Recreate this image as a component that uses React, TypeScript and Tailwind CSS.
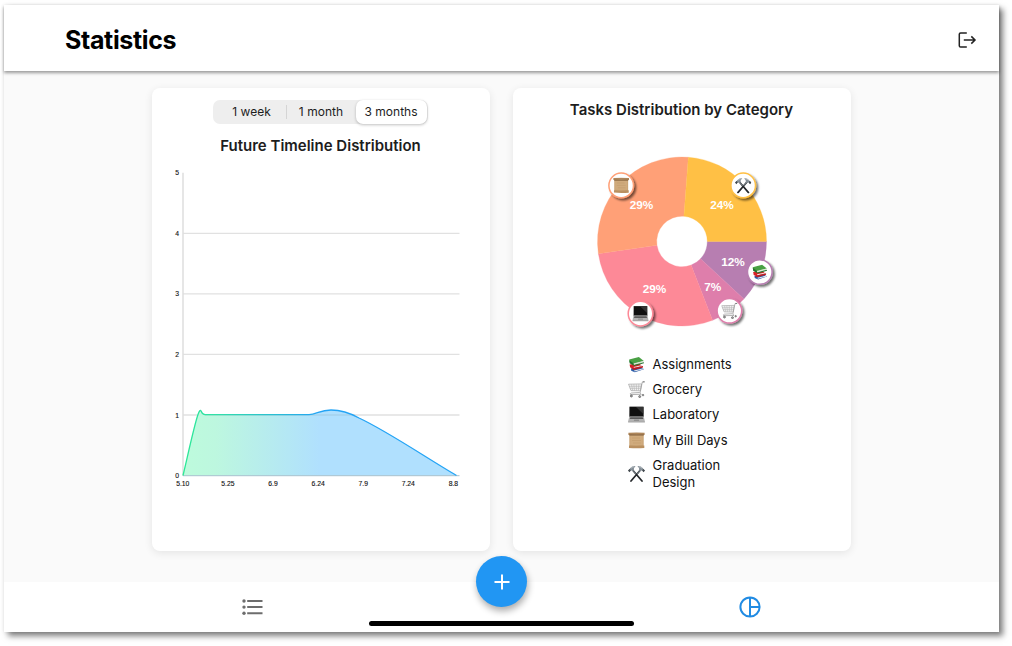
import React from "react";

type IconProps = { x?: number; y?: number; size?: number };

function Books({ x, y, size = 17 }: IconProps) {
  return (
    <svg x={x} y={y} width={size} height={size} viewBox="0 0 17 17">
      <path d="M3 12.4 12.5 10.8 16 13.2 6.8 16.2 3.2 14.8Z" fill="#2d5da8" />
      <path d="M6 14.4 15.4 12.2 15.4 13.3 6.5 15.4Z" fill="#e4e8ee" />
      <path d="M1.6 8.6 11.2 7.5 14.2 10 5.5 12.8 2.2 11.6Z" fill="#d92127" />
      <path d="M5.6 10.9 14 9 14.4 10 6 12.1Z" fill="#f1e5e1" />
      <path d="M5.3 12.1 15 9.9 15 11.4 6 13.9 3 12.6Z" fill="#bd1c24" />
      <path d="M1.2 3.6 10.9 1 15.8 4.9 5.7 8 1.5 5.5Z" fill="#49a044" />
      <path d="M5.3 7.5 15.2 4.9 15.4 6.6 6 9.2Z" fill="#dbe6d6" />
      <path d="M1.2 4.2 5.5 7.3 5.9 9.8 1.6 7.2ZM5.8 8.9 15.9 6.2 15.9 7.3 6 10Z" fill="#24752f" />
    </svg>
  );
}

function Cart({ x, y, size = 17 }: IconProps) {
  return (
    <svg x={x} y={y} width={size} height={size} viewBox="0 0 17 17" fill="none">
      <path d="M.5 3.2 13.6 2.9 12.4 9.8 3 9.6Z" fill="#f2f2f2" stroke="#a5a5a5" strokeWidth=".7" />
      <path d="M1.2 5.3h12M1.9 7.3h10.8M3.5 3.3l1.1 6.2M5.8 3.2l.7 6.4M8.3 3.2l.2 6.4M10.9 3.1l-.5 6.5" stroke="#b2b2b2" strokeWidth=".6" />
      <path d="M16.5 .9 14.3 1.1 12.2 11.2Q11.7 12.5 13.3 13.3L2.5 13.6Q1.6 12.5 3.4 12L11.7 11.5" stroke="#999" strokeWidth=".75" />
      <path d="M14.7 .8h2" stroke="#666" strokeWidth=".8" />
      <circle cx="3.4" cy="15" r="1" fill="#aaa" stroke="#555" strokeWidth=".7" />
      <circle cx="11.7" cy="15.6" r="1" fill="#aaa" stroke="#555" strokeWidth=".7" />
      <circle cx="15" cy="14.1" r=".8" fill="#aaa" stroke="#555" strokeWidth=".6" />
    </svg>
  );
}

function Laptop({ x, y, size = 17 }: IconProps) {
  return (
    <svg x={x} y={y} width={size} height={size} viewBox="0 0 17 17">
      <path d="M1.3 .5H15.7L15.9 11H1.1Z" fill="#777" />
      <path d="M1.7 .9H15.3V10.3H1.7Z" fill="#101010" />
      <path d="M8 .9h7.3V8Z" fill="#333" />
      <path d="M1.2 10.7H15.8L16.9 15.5H.1Z" fill="#b2b2b2" />
      <path d="M2.3 11.2H14.7L15.3 13H1.7Z" fill="#5a5a5a" />
      <path d="M6.2 13.5h4.6l.4 1.4H5.8Z" fill="#909090" />
      <path d="M.1 15.4H16.9v1H.1Z" fill="#8f8f8f" />
    </svg>
  );
}

function Scroll({ x, y, size = 17 }: IconProps) {
  return (
    <svg x={x} y={y} width={size} height={size} viewBox="0 0 17 17">
      <path d="M1.3 2.3H15.7V15H1.3Z" fill="#c8a273" />
      <path d="M2.2 3.4H14.8V13H2.2Z" fill="#d0ab7d" />
      <path d="M.4 .8Q8.5.2 16.6 .8V2.9Q8.5 2.4.4 2.9Z" fill="#ae865a" />
      <path d="M1.2 2.6H15.8V3.4H1.2Z" fill="#70502f" />
      <path d="M1 13.6Q8.5 14.4 16.3 13.5V16Q8 16.6 1 15.9Z" fill="#ba9060" />
      <path d="M4 6h8M4 8.5h9M5 11h8" stroke="#bb9362" strokeWidth=".4" />
    </svg>
  );
}

function Hammers({ x, y, size = 17 }: IconProps) {
  return (
    <svg x={x} y={y} width={size} height={size} viewBox="0 0 17 17" fill="none">
      <path d="M4.6 5 14 16M12.4 5 3 16" stroke="#24272a" strokeWidth="1.75" strokeLinecap="round" />
      <path d="M4.4 4.6 8 9M12.6 4.6 9 9" stroke="#727a80" strokeWidth="1.1" />
      <path d="M.3 5.5 2.6 2.8Q4.6.5 7.6 1.3L6 3 5.8 5.1 4.5 6.2 3.3 5.2 1.6 7Z" fill="#848e96" />
      <path d="M16.7 5.5 14.4 2.8Q12.4.5 9.4 1.3L11 3 11.2 5.1 12.5 6.2 13.7 5.2 15.4 7Z" fill="#848e96" />
      <path d="M0 5.5 1.6 4 2.8 5.3 1.4 7.2ZM17 5.5 15.4 4 14.2 5.3 15.6 7.2Z" fill="#42484d" />
      <path d="M3 3.2Q4.5 1.7 6.2 1.7M14 3.2Q12.5 1.7 10.8 1.7" stroke="#cdd3d7" strokeWidth=".7" />
    </svg>
  );
}

const curve =
  "M183 475.5C187 459 194 426 198 414.5Q200 408.5 201.2 411.2Q202.5 414.6 205 414.6H309C316 414.6 320 410 331 410C339 410 350 413 359 418C387 431 425 457 456.5 475.5";

function LineChart() {
  return (
    <svg width="338" height="340" viewBox="152 160 338 340" className="block">
      <defs>
        <linearGradient id="stroke" gradientUnits="userSpaceOnUse" x1="183" x2="457" y1="0" y2="0">
          <stop stopColor="#2be896" />
          <stop offset=".12" stopColor="#32dfa8" />
          <stop offset=".5" stopColor="#24a4f5" />
          <stop offset="1" stopColor="#24a4f5" />
        </linearGradient>
        <linearGradient id="area" gradientUnits="userSpaceOnUse" x1="183" x2="457" y1="0" y2="0">
          <stop stopColor="#bdfbdc" />
          <stop offset=".12" stopColor="#bdf7df" />
          <stop offset=".5" stopColor="#b0e0fe" />
          <stop offset="1" stopColor="#b0e0fe" />
        </linearGradient>
      </defs>
      {[233.3, 293.8, 354.4, 415].map((y) => (
        <path key={y} d={`M183 ${y}H459.5`} stroke="#e1e1e1" strokeWidth="1.3" />
      ))}
      <path d="M183 172.7V476" stroke="#dedede" strokeWidth="1.5" />
      <path d={`${curve}Z`} fill="url(#area)" />
      <path d="M205 415H355" stroke="#849aa5" strokeOpacity=".2" strokeWidth="1.3" />
      <path d="M183 475.7H459.5" stroke="#a5c0cd" strokeWidth="1" />
      <path d={curve} fill="none" stroke="url(#stroke)" strokeWidth="1.3" />
      <g className="font-['Liberation_Sans'] text-[6.8px]" fill="#111" stroke="#111" strokeWidth=".12">
        {[5, 4, 3, 2, 1, 0].map((n, i) => (
          <text key={n} x="179" y={175.2 + i * 60.6} textAnchor="end">{n}</text>
        ))}
        {["5.10", "5.25", "6.9", "6.24", "7.9", "7.24", "8.8"].map((t, i) => (
          <text key={t} x={182.8 + i * 45.1} y="486" textAnchor="middle">{t}</text>
        ))}
      </g>
    </svg>
  );
}

const slices = [
  { from: 0, to: 42.9, color: "#b77eb1" },
  { from: 42.9, to: 68.8, color: "#de7eab" },
  { from: 68.8, to: 171.7, color: "#fd8997" },
  { from: 171.7, to: 274.3, color: "#ffa077" },
  { from: 274.3, to: 360, color: "#ffc045" },
];

const badges = [
  { x: 621.2, y: 185.4, color: "#ffa077", Icon: Scroll },
  { x: 743.2, y: 185.4, color: "#ffc045", Icon: Hammers },
  { x: 759.8, y: 272, color: "#b77eb1", Icon: Books },
  { x: 729.4, y: 310.8, color: "#de7eab", Icon: Cart },
  { x: 640.5, y: 313.6, color: "#fd8997", Icon: Laptop },
];

const percents: [string, number, number][] = [
  ["29%", 641.5, 209],
  ["24%", 722, 209],
  ["12%", 733, 266],
  ["7%", 712.7, 291.2],
  ["29%", 654.5, 293.3],
];

function slicePath(from: number, to: number) {
  const point = (r: number, deg: number) => {
    const a = (deg * Math.PI) / 180;
    return `${682 + r * Math.cos(a)} ${241.5 + r * Math.sin(a)}`;
  };
  return `M${point(84.5, from)}A84.5 84.5 0 0 1 ${point(84.5, to)}L${point(25.3, to)}A25.3 25.3 0 0 0 ${point(25.3, from)}Z`;
}

function PieChart() {
  return (
    <svg width="338" height="200" viewBox="513 140 338 200" className="block">
      <defs>
        <filter id="badge-shadow" x="-50%" y="-50%" width="200%" height="200%">
          <feDropShadow dx="2" dy="2" stdDeviation="1.2" floodColor="#000" floodOpacity=".55" />
        </filter>
      </defs>
      {slices.map((s) => (
        <path key={s.from} d={slicePath(s.from, s.to)} fill={s.color} stroke={s.color} strokeWidth=".3" />
      ))}
      <g className="font-['Liberation_Sans'] text-[11.8px] font-bold" fill="#fff" textAnchor="middle">
        {percents.map(([t, x, y]) => (
          <text key={`${x}`} x={x} y={y}>{t}</text>
        ))}
      </g>
      {badges.map(({ x, y, color, Icon }) => (
        <g key={color}>
          <circle cx={x} cy={y} r="12.3" fill="#fff" stroke={color} strokeWidth="1.5" filter="url(#badge-shadow)" />
          <Icon x={x - 8.2} y={y - 8.2} size={16.4} />
        </g>
      ))}
    </svg>
  );
}

const legend = [
  { Icon: Books, label: "Assignments" },
  { Icon: Cart, label: "Grocery" },
  { Icon: Laptop, label: "Laboratory" },
  { Icon: Scroll, label: "My Bill Days" },
];

export default function App() {
  return (
    <div className="h-[646px] w-[1012px] overflow-hidden bg-white pl-1 pt-[5px] font-['Inter',sans-serif] text-[#1d1d1d]">
      <div className="flex h-[627px] w-[995px] flex-col bg-[#fafafa] shadow-[4px_4px_6px_0px_rgba(0,0,0,0.5),0_0_4px_rgba(0,0,0,0.08)]">
        <header className="relative flex h-[66px] shrink-0 items-center justify-between bg-white pl-[61px] pr-[22px] pt-[4px] shadow-[0_2px_3px_rgba(0,0,0,0.38)]">
          <h1 className="text-[25px] font-bold leading-8 tracking-[-0.35px] text-black">Statistics</h1>
          <button aria-label="Log out">
            <svg width="19" height="18" viewBox="0 0 19 18" fill="none" stroke="#222" strokeWidth="1.5">
              <path d="M8.8 2H2.6Q1.3 2 1.3 3.3V14.7Q1.3 16 2.6 16H8.8" />
              <path d="M5.8 9H17M13.3 5.4 17 9 13.3 12.6" />
            </svg>
          </button>
        </header>

        <main className="flex h-[511px] shrink-0 justify-center gap-[23px] pr-px pt-[17px]">
          <section className="h-[462.5px] w-[338px] rounded-lg bg-white pt-[12px] shadow-[0_2px_9px_rgba(0,0,0,0.09)]">
            <div className="ml-[61px] flex h-6 w-[215px] items-center rounded-[7px] bg-[#eee] text-[12px] tracking-[0.03px]">
              <button className="h-6 w-[73px] pl-[5px]">1 week</button>
              <span className="h-3.5 w-px bg-[#d5d5d5]" />
              <button className="h-6 w-[69px]">1 month</button>
              <button className="h-6 w-[71px] rounded-[7px] bg-white shadow-[0_1px_3px_rgba(0,0,0,0.25)]">3 months</button>
            </div>
            <h2 className="mt-[12px] h-[24px] text-center text-[15px] font-semibold leading-[20px]">Future Timeline Distribution</h2>
            <LineChart />
          </section>

          <section className="h-[462.5px] w-[338px] rounded-lg bg-white pt-[12px] shadow-[0_2px_9px_rgba(0,0,0,0.09)]">
            <h2 className="h-10 text-center text-[15px] font-semibold leading-[20px]">Tasks Distribution by Category</h2>
            <PieChart />
            <ul className="ml-[115px] mt-[11.6px] text-[13px] leading-[17px] text-[#111]">
              {legend.map(({ Icon, label }) => (
                <li key={label} className="flex h-[25.3px] items-center gap-2">
                  <Icon />
                  <span>{label}</span>
                </li>
              ))}
              <li className="flex h-[42px] items-center gap-2">
                <Hammers />
                <span className="w-[80px]">Graduation Design</span>
              </li>
            </ul>
          </section>
        </main>

        <nav className="relative flex h-[50px] shrink-0 bg-white">
          <button aria-label="Tasks" className="flex w-1/2 justify-center pt-[17px]">
            <svg width="21" height="16" viewBox="0 0 21 16" fill="#6d6d6d">
              <circle cx="2" cy="2" r="1.7" />
              <circle cx="2" cy="8.1" r="1.7" />
              <circle cx="2" cy="14.3" r="1.7" />
              <path d="M5.2 1h15.3v2H5.2zM5.2 7.1h15.3v2H5.2zM5.2 13.3h15.3v2H5.2z" />
            </svg>
          </button>
          <button aria-label="Statistics" className="flex w-1/2 justify-center pt-[14px]">
            <svg width="22" height="22" viewBox="0 0 22 22" fill="none" stroke="#218be3" strokeWidth="2">
              <circle cx="11" cy="11" r="9.6" />
              <path d="M11 1.4V20.6M11 11H20.6" />
            </svg>
          </button>
          <button aria-label="Add task" className="absolute left-[472px] top-[-26px] flex h-[51px] w-[51px] items-center justify-center rounded-full bg-[#2196f3] shadow-[1px_4px_7px_rgba(0,0,0,0.33)]">
            <svg width="16" height="16" viewBox="0 0 16 16" stroke="#fff" strokeWidth="2">
              <path d="M8 .5v15M.5 8h15" />
            </svg>
          </button>
          <span className="absolute bottom-[6px] left-[365px] h-[5px] w-[265px] rounded-full bg-black" />
        </nav>
      </div>
    </div>
  );
}
